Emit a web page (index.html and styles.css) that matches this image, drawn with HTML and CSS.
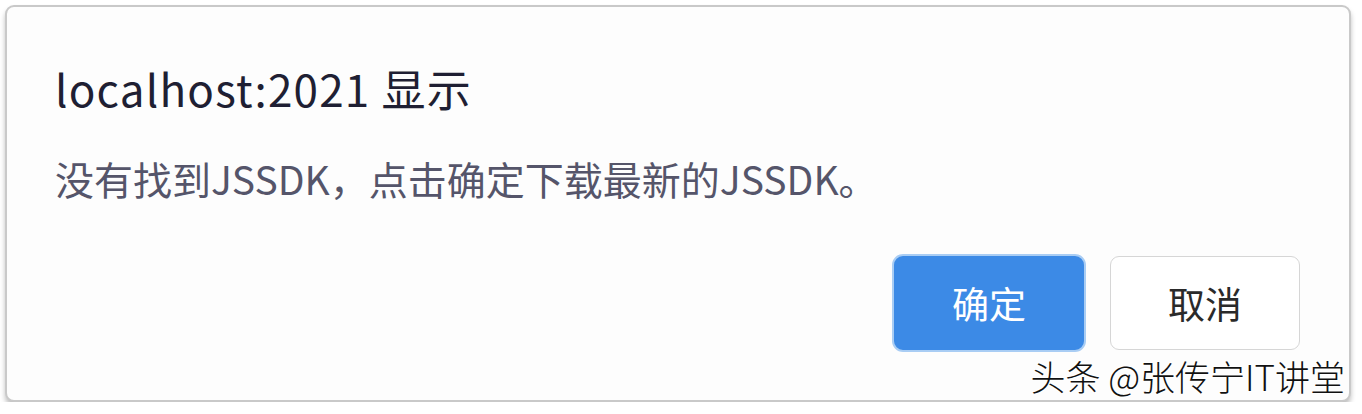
FILE: index.html
```html
<!DOCTYPE html>
<html lang="zh-CN">
<head>
<meta charset="utf-8">
<link rel="stylesheet" href="styles.css">
</head>
<body>
<div class="dialog">
  <div class="title">localhost:2021 显示</div>
  <div class="message">没有找到JSSDK，点击确定下载最新的JSSDK。</div>
  <div class="actions">
    <button class="btn primary">确定</button>
    <button class="btn">取消</button>
  </div>
  <div class="watermark">头条 @张传宁IT讲堂</div>
</div>
</body>
</html>
```
FILE: styles.css
```css
html, body {
  margin: 0;
  background: #ffffff;
}
body {
  padding: 5px 11px 0 5px;
  font-family: "Noto Sans CJK SC", "Noto Sans", sans-serif;
}
.dialog {
  position: relative;
  box-sizing: border-box;
  width: 1346px;
  height: 397px;
  background: #fdfdfd;
  border: 2px solid #c9c9c9;
  border-radius: 9px;
  box-shadow: 0 4px 5px rgba(0,0,0,0.25);
  padding: 52px 49px 0 48px;
}
.title {
  font-size: 44px;
  line-height: 58px;
  letter-spacing: 1.2px;
  color: #1f1f33;
}
.message {
  margin-top: 36px;
  font-size: 39px;
  line-height: 50px;
  color: #55556a;
}
.actions {
  display: flex;
  justify-content: flex-end;
  align-items: center;
  gap: 24px;
  margin-top: 51px;
}
.btn {
  box-sizing: border-box;
  width: 190px;
  height: 94px;
  font-family: inherit;
  font-size: 37px;
  color: #2a2a2a;
  background: #fff;
  border: 1px solid #d6d6d6;
  border-radius: 9px;
}
.btn.primary {
  width: 194px;
  height: 98px;
  background: #3c8ae6;
  color: #fff;
  border: 2px solid #a9cdf4;
  border-radius: 11px;
}
.watermark {
  position: absolute;
  right: 4px;
  bottom: 2px;
  font-size: 35px;
  line-height: 44px;
  font-weight: 300;
  color: #111;
  text-shadow: 1px 1px 0 #fff, -1px -1px 0 #fff, 1px -1px 0 #fff, -1px 1px 0 #fff;
}
```
